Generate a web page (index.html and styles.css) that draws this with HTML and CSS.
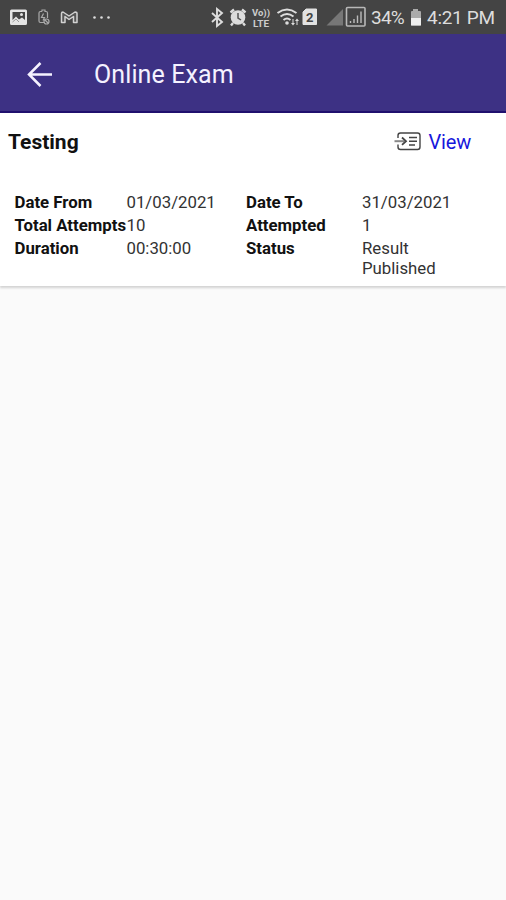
FILE: index.html
```html
<!DOCTYPE html>
<html lang="en">
<head>
<meta charset="utf-8">
<title>Online Exam</title>
<link rel="stylesheet" href="styles.css">
</head>
<body>
<header class="status">
  <svg class="left-icons" width="116" height="34" viewBox="0 0 116 34">
    <path fill="#e4e4e4" fill-rule="evenodd" d="M11.500 9.500h14q1.500 0 1.500 1.500v12.500q0 1.500-1.500 1.500h-14q-1.500 0-1.500-1.500v-12.500q0-1.500 1.500-1.500zM12.500 12v8l3.500-3.500 3 3 3-2 3 2.500v-8z"/>
    <circle cx="21.500" cy="14.500" r="1.500" fill="#e4e4e4"/>
    <path d="M12.500 22l3.500-3 3 3" stroke="#999" fill="none"/>
    <g fill="none" stroke="#aaa" stroke-width="1.200"><path d="M42 11.500h-1.500q-1.500 0-1.500 1.500v8q0 1.500 1.500 1.500h4M42 11.500v-1.500h3v1.500h1q1.500 0 1.500 1.500v5M43.500 13.500l-2 4h3l-1.500 3"/><circle cx="46.500" cy="21.500" r="2.500"/><path d="M45 20l3 3"/></g>
    <path d="M61.500 22.500v-9q0-1.500 1.500-1.500l6 4 6-4q2 0 2 1.500v9h-3.500v-6l-4.500 3-4-3v6z" fill="#555" stroke="#d2d2d2" stroke-width="1.500" stroke-linejoin="round"/>
    <g fill="#ddd"><circle cx="94.500" cy="17.500" r="1.300"/><circle cx="101.500" cy="17.500" r="1.300"/><circle cx="108.500" cy="17.500" r="1.300"/></g>
  </svg>
  <svg class="radio-icons" width="159" height="34" viewBox="209 0 159 34">
    <path d="M212 13l10 9-5 4V9l5 4-10 9" fill="none" stroke="#ddd" stroke-width="1.900"/>
    <g stroke="#ddd" stroke-width="2.400"><path d="M230.500 12.500l3.500-3M245.500 12.500l-3.500-3M233 23l-2 2.500M243 23l2 2.500"/></g>
    <circle cx="238" cy="17.500" r="7.300" fill="#ddd"/><path d="M238 13v5l3 2" fill="none" stroke="#555" stroke-width="1.500"/>
    <g class="volte"><text x="252" y="16" textLength="18" lengthAdjust="spacingAndGlyphs">Vo))</text><text x="253" y="26.500" textLength="16" lengthAdjust="spacingAndGlyphs">LTE</text></g>
    <g fill="none" stroke="#ddd" stroke-width="2"><path d="M277.500 13q9.500-7 19 0M280.500 16.500q6.500-5 13 0M283.500 20q3.500-3 7 0"/></g><circle cx="287" cy="23" r="1.800" fill="#ddd"/>
    <path d="M292.500 19v4h-1.500l2 2.500 2-2.500h-1.500v-4zM296.500 25v-4h-1.500l2-2.500 2 2.500h-1.500v4z" fill="#ddd"/>
    <path d="M306 9h10.500v15.500h-13.500V12z" fill="#e2e2e2" stroke="#e2e2e2" stroke-linejoin="round"/>
    <text class="sim" x="306" y="22">2</text>
    <path d="M326.500 25.500l16.500-16.500v16.500z" fill="#777"/>
    <rect x="346.500" y="7.500" width="18.500" height="18.500" rx="1" fill="none" stroke="#b8b8b8" stroke-width="1.600"/>
    <path d="M350.500 21v2M354 19v4M357.500 15.500v7.500M361 11.500v11.500" stroke="#bbb" stroke-width="1.400"/>
  </svg>
  <span class="percent">34%</span>
  <svg class="battery" width="12" height="34" viewBox="410 0 12 34"><path d="M413 9h5v2h2q1 0 1 1v12.500q0 1-1 1h-8q-1 0-1-1V12q0-1 1-1h1z" fill="#aaa"/><path d="M411 18h10v7.500h-10z" fill="#eee"/></svg>
  <span class="clock">4:21 PM</span>
</header>
<nav class="appbar">
  <svg width="28" height="28" viewBox="0 0 28 28" fill="none" stroke="#f5f2ff" stroke-width="2.500"><path d="M26 13.500H3M14.500 2L3 13.500 14.500 25"/></svg>
  <h1>Online Exam</h1>
</nav>
<main class="card">
  <div class="heading">
    <h2>Testing</h2>
    <a class="view">
      <svg width="28" height="20" viewBox="393 132 28 20" fill="none" stroke="#444" stroke-width="1.400"><path d="M398 138v-2.500q0-2.500 2.500-2.500h17q2.500 0 2.500 2.500v11.500q0 2.500-2.500 2.500h-17q-2.500 0-2.500-2.500v-2.500"/><path d="M394.500 141.200h10" stroke="#888" stroke-width="2"/><path d="M402 137.500l4 3.700-4 3.700" stroke-width="1.800"/><path d="M409 137.500h8M409 141.200h8M409 145h6"/></svg>
      <span>View</span>
    </a>
  </div>
  <dl class="details">
    <dt>Date From</dt><dd>01/03/2021</dd><dt>Date To</dt><dd>31/03/2021</dd>
    <dt>Total Attempts</dt><dd>10</dd><dt>Attempted</dt><dd>1</dd>
    <dt>Duration</dt><dd>00:30:00</dd><dt>Status</dt><dd class="result">Result<br>Published</dd>
  </dl>
</main>
</body>
</html>
```
FILE: styles.css
```css
* { box-sizing: border-box; }
body { margin: 0; min-height: 900px; background: #fafafa; color: #111; font-family: Roboto, sans-serif; }
svg { display: block; flex: none; }
.status { height: 34px; display: flex; background: #444; color: #ddd; font-size: 19px; letter-spacing: -0.3px; line-height: 36px; white-space: nowrap; }
.radio-icons { margin-left: 93px; }
.percent { width: 42px; padding-left: 3px; letter-spacing: -0.8px; }
.clock { padding-left: 5px; }
.volte { fill: #ccc; font-size: 9.500px; font-weight: 700; letter-spacing: 0; }
.sim { fill: #444; font-size: 13px; font-weight: 700; letter-spacing: 0; }
.appbar { height: 79px; padding: 5px 0 0 26px; display: flex; align-items: center; gap: 40px; background: #3d3184; border-bottom: 2px solid #20106e; }
h1 { margin: 0; font-size: 25px; letter-spacing: 0.1px; font-weight: 400; line-height: 32px; color: #f5f2ff; }
.card { height: 173px; background: #fff; box-shadow: 0 2px 2px #d4d4d4; }
.heading { height: 77px; padding: 16px 35px 0 8px; display: flex; justify-content: space-between; align-items: flex-start; }
h2 { margin: 0; font-size: 21px; line-height: 26px; font-weight: 700; }
.view { display: flex; align-items: center; gap: 8px; color: #1717dc; font-size: 20px; letter-spacing: -0.2px; line-height: 26px; }
.details { margin: 0; padding-left: 14.500px; display: grid; grid-template-columns: 112px 119.500px 116px 100px; grid-template-rows: 23px 23px 40px; font-size: 16.800px; line-height: 24px; white-space: nowrap; }
dt { font-weight: 700; }
dd { margin: 0; color: #333; }
.result { line-height: 20px; padding-top: 2px; }
```
